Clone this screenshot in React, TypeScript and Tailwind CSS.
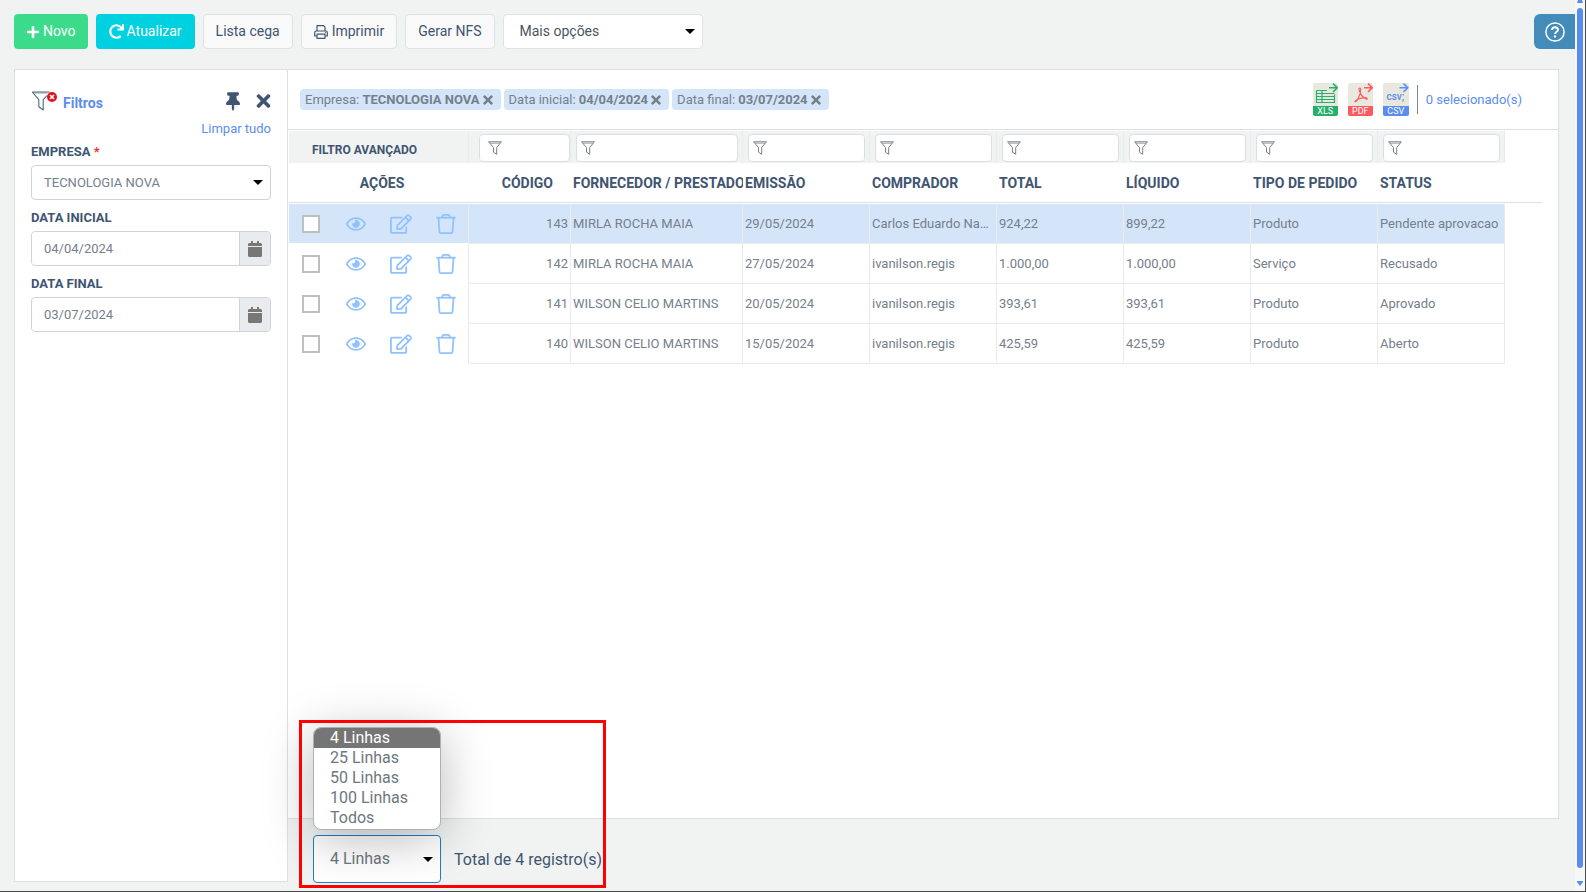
import type { ReactNode } from "react";
import { FaPlus, FaRedo, FaThumbtack, FaTimes, FaCalendar, FaRegEye, FaRegEdit } from "react-icons/fa";

type Row = {
  codigo: string;
  fornecedor: string;
  emissao: string;
  comprador: string;
  total: string;
  liquido: string;
  tipo: string;
  status: string;
};

const rows: Row[] = [
  { codigo: "143", fornecedor: "MIRLA ROCHA MAIA", emissao: "29/05/2024", comprador: "Carlos Eduardo Nascimento", total: "924,22", liquido: "899,22", tipo: "Produto", status: "Pendente aprovacao" },
  { codigo: "142", fornecedor: "MIRLA ROCHA MAIA", emissao: "27/05/2024", comprador: "ivanilson.regis", total: "1.000,00", liquido: "1.000,00", tipo: "Serviço", status: "Recusado" },
  { codigo: "141", fornecedor: "WILSON CELIO MARTINS", emissao: "20/05/2024", comprador: "ivanilson.regis", total: "393,61", liquido: "393,61", tipo: "Produto", status: "Aprovado" },
  { codigo: "140", fornecedor: "WILSON CELIO MARTINS", emissao: "15/05/2024", comprador: "ivanilson.regis", total: "425,59", liquido: "425,59", tipo: "Produto", status: "Aberto" },
];

const columns = ["FORNECEDOR / PRESTADOR", "EMISSÃO", "COMPRADOR", "TOTAL", "LÍQUIDO", "TIPO DE PEDIDO", "STATUS"];
const pageSizes = ["4 Linhas", "25 Linhas", "50 Linhas", "100 Linhas", "Todos"];

function Caret() {
  return (
    <svg className="pointer-events-none absolute inset-y-0 right-2 my-auto h-[5px] w-[10px]" viewBox="0 0 10 5" aria-hidden="true">
      <path d="M0 0h10L5 5z" fill="#000" />
    </svg>
  );
}

function Funnel({ className }: { className: string }) {
  return (
    <svg className={className} viewBox="0 0 14 14" fill="none" stroke="currentColor" strokeWidth="1" strokeLinejoin="round" aria-hidden="true">
      <path d="M.6.8h12.8L8.7 6.600V13.300L5.500 11.200V6.600z" />
      <path d="M2 2.200h10" strokeWidth=".7" />
    </svg>
  );
}

function FunnelClear() {
  return (
    <div className="relative h-5 w-8 text-[#4f6880]">
      <svg className="h-5 w-6" viewBox="0 0 24 20" fill="none" stroke="currentColor" strokeWidth="1.100" strokeLinejoin="round" aria-hidden="true">
        <path d="M1.200 1h17.600M1.200 1l6.600 7.600V15.800L12.200 19V8.600L16 4.500" />
        <path d="M2.500 2h14" strokeWidth=".6" />
      </svg>
      <span className="absolute left-4 top-[1px] flex size-[10px] items-center justify-center rounded-full bg-[#e3101f] text-white">
        <svg className="size-[6px]" viewBox="0 0 6 6" stroke="currentColor" strokeWidth="1.600" aria-hidden="true">
          <path d="M1 1l4 4M5 1L1 5" />
        </svg>
      </span>
    </div>
  );
}

function Printer() {
  return (
    <svg className="size-[14px]" viewBox="0 0 14 14" fill="none" stroke="currentColor" strokeWidth="1.2" strokeLinejoin="round" aria-hidden="true">
      <path d="M3 6V.700h6.500L11 2.200V6" />
      <path d="M2.800 11H.700V7.500Q.700 6 2.200 6h9.600q1.500 0 1.500 1.500V11h-2.100" />
      <path d="M3 9.200h8v4.100H3z" />
      <path d="M11 7.600h.8" />
    </svg>
  );
}

function Trash() {
  return (
    <svg className="size-5" viewBox="0 0 20 20" fill="none" stroke="currentColor" strokeWidth="1.800" strokeLinejoin="round" aria-hidden="true">
      <path d="M.3 3.700h19.400" />
      <path d="M5.800 3.500 6.800 1.300q.2-.4.700-.4h5q.5 0 .7.4l1 2.200" />
      <path d="M2.500 4l1 14q.1 1.100 1.200 1.100h10.600q1.100 0 1.200-1.100l1-14" />
    </svg>
  );
}

function PlainButton({ children }: { children: ReactNode }) {
  return (
    <button type="button" className="flex h-[35px] items-center gap-1 rounded-[4px] border border-[#dfe2e4] bg-[#f9f9f9] px-3 text-[#405571]">
      {children}
    </button>
  );
}

function Chip({ label, value }: { label: string; value: string }) {
  return (
    <span className="flex h-[21px] items-center rounded-[4px] bg-[#d4e5fa] pl-[5px] pr-2 text-[13px] text-[#74808c]">
      <span className="whitespace-pre">{label}: </span>
      <b className="font-bold">{value}</b>
      <button type="button" aria-label={`Remover ${label}`} className="ml-[3px]">
        <FaTimes className="h-[14px] w-[10px]" />
      </button>
    </span>
  );
}

function ExportButton({ label, width, tone, bar, children }: { label: string; width: string; tone: string; bar: string; children: ReactNode }) {
  return (
    <button type="button" aria-label={`Exportar ${label}`} className={`flex flex-col overflow-hidden rounded-[2px] bg-[#e8e8de] ${width} ${tone}`}>
      <svg className="h-[23px] w-full" viewBox="0 0 25 23" aria-hidden="true">
        {children}
        <path d="M16 4.800h8.300M20 .6l4.300 4.200L20 9" fill="none" stroke="currentColor" strokeWidth="1.600" />
      </svg>
      <span className={`h-[10px] w-full text-center text-[9px] leading-[10px] text-white ${bar}`}>{label}</span>
    </button>
  );
}

function DateField({ id, label, value }: { id: string; label: string; value: string }) {
  return (
    <div className="flex flex-col">
      <label htmlFor={id} className="h-[31px] pt-[9px] text-[13px] leading-[18px] font-bold text-[#405571]">{label}</label>
      <div className="flex h-[35px] rounded-[4px] border border-[#ced4da] text-[13px]">
        <input id={id} defaultValue={value} className="min-w-0 flex-1 rounded-l-[4px] bg-white px-3 text-[#74808c] outline-none" />
        <button type="button" aria-label={`Abrir calendário: ${label}`} className="flex w-[31px] items-center justify-center rounded-r-[3px] border-l border-[#ced4da] bg-[#e9ecef] text-[#777]">
          <FaCalendar className="size-4" />
        </button>
      </div>
    </div>
  );
}

function Sidebar() {
  return (
    <aside className="flex w-[274px] shrink-0 flex-col border border-[#dcdfe4] bg-white px-4 pt-[19px]">
      <div className="flex h-6 items-center">
        <FunnelClear />
        <h2 className="pt-1 text-[14px] font-bold text-[#5b8def]">Filtros</h2>
        <div className="ml-auto flex items-center gap-4 text-[#405571]">
          <button type="button" aria-label="Fixar filtros"><FaThumbtack className="h-[19px] w-[14px]" /></button>
          <button type="button" aria-label="Fechar filtros"><FaTimes className="h-5 w-[15px]" /></button>
        </div>
      </div>
      <button type="button" className="mt-[6px] self-end text-[13px] leading-5 text-[#5b8def]">Limpar tudo</button>
      <label htmlFor="empresa" className="mt-[3px] h-[23px] pt-[1px] text-[13px] leading-[18px] font-bold text-[#405571]">
        EMPRESA <span className="text-[#e3342f]">*</span>
      </label>
      <div className="relative">
        <select id="empresa" className="block h-[35px] w-full appearance-none rounded-[4px] border border-[#ced4da] bg-white px-3 text-[13px] text-[#74808c]">
          <option>TECNOLOGIA NOVA</option>
        </select>
        <Caret />
      </div>
      <DateField id="data-inicial" label="DATA INICIAL" value="04/04/2024" />
      <DateField id="data-final" label="DATA FINAL" value="03/07/2024" />
    </aside>
  );
}

function OrdersTable() {
  const cell = "h-10 truncate border-r border-b border-[#e9ebed] px-[2px]";
  return (
    <table className="w-full table-fixed border-separate border-spacing-0 text-left text-[13px] text-[#74808c]">
      <colgroup>
        <col className="w-[180px]" />
        <col className="w-[102px]" />
        <col className="w-[172px]" />
        <col className="w-[127px]" />
        <col className="w-[127px]" />
        <col className="w-[127px]" />
        <col className="w-[127px]" />
        <col className="w-[127px]" />
        <col className="w-[127px]" />
        <col />
      </colgroup>
      <thead className="text-[#405571]">
        <tr>
          <td className="h-[33px] border-t border-r border-t-white border-r-[#e9ebed] bg-[#f1f3f3] pl-[23px] pt-[5px] text-[12px] font-bold">FILTRO AVANÇADO</td>
          <td className="border-t border-r border-t-white border-r-[#e9ebed] bg-[#f1f3f3] pl-[10px] pt-[2px]">
            <div className="flex h-7 items-center rounded-[4px] border border-[#dcdfe0] bg-white pl-2 text-[#74808c]">
              <Funnel className="size-[14px] shrink-0" />
              <input aria-label="Filtrar CÓDIGO" className="min-w-0 flex-1 outline-none" />
            </div>
          </td>
          {columns.map((name) => (
            <td key={name} className="border-t border-r border-t-white border-r-[#e9ebed] bg-[#f1f3f3] pl-[5px] pr-1 pt-[2px]">
              <div className="flex h-7 items-center rounded-[4px] border border-[#dcdfe0] bg-white pl-1 text-[#74808c]">
                <Funnel className="size-[14px] shrink-0" />
                <input aria-label={`Filtrar ${name}`} className="min-w-0 flex-1 outline-none" />
              </div>
            </td>
          ))}
          <td />
        </tr>
        <tr className="text-[14px]">
          <th className="h-10 border-b border-[#dcdfe4] pl-[6px] pt-[2px] text-center font-bold">AÇÕES</th>
          <th className="border-b border-[#dcdfe4] pr-[18px] pt-[2px] text-right font-bold">CÓDIGO</th>
          {columns.map((name) => (
            <th key={name} className="overflow-hidden border-b border-[#dcdfe4] pl-[2px] pt-[2px] font-bold whitespace-nowrap">{name}</th>
          ))}
          <td className="border-b border-[#dcdfe4]" />
        </tr>
      </thead>
      <tbody className="[&>tr:first-child>td]:h-[41px] [&>tr:first-child>td]:border-t [&>tr:first-child>td]:border-t-white">
        {rows.map((row, i) => {
          const bg = i === 0 ? "bg-[#d4e5fa]" : "";
          return (
            <tr key={row.codigo}>
              <td className={`h-10 border-r border-b border-r-[#e9ebed] border-b-white ${bg}`}>
                <div className="grid grid-cols-4 items-center justify-items-center text-[#90c3fd]">
                  <input type="checkbox" aria-label={`Selecionar pedido ${row.codigo}`} className="size-[18px] appearance-none border-2 border-[#bfbfbf] bg-white" />
                  <button type="button" aria-label="Visualizar"><FaRegEye className="size-5" /></button>
                  <button type="button" aria-label="Editar"><FaRegEdit className="size-[22px]" /></button>
                  <button type="button" aria-label="Excluir"><Trash /></button>
                </div>
              </td>
              <td className={`${cell} text-right ${bg}`}>{row.codigo}</td>
              <td className={`${cell} ${bg}`}>{row.fornecedor}</td>
              <td className={`${cell} ${bg}`}>{row.emissao}</td>
              <td className={`${cell} ${bg}`}>{row.comprador}</td>
              <td className={`${cell} ${bg}`}>{row.total}</td>
              <td className={`${cell} ${bg}`}>{row.liquido}</td>
              <td className={`${cell} ${bg}`}>{row.tipo}</td>
              <td className={`${cell} ${bg}`}>{row.status}</td>
              <td />
            </tr>
          );
        })}
      </tbody>
    </table>
  );
}

function Footer() {
  return (
    <footer className="relative flex h-[63px] items-center pl-[25px]">
      <div className="relative mt-[17px] w-32">
        <select aria-label="Linhas por página" className="block h-12 w-full appearance-none rounded-[4px] border border-[#1b7fc9] bg-white px-4 text-[16px] text-[#6d7780] outline-none">
          {pageSizes.map((size) => (
            <option key={size}>{size}</option>
          ))}
        </select>
        <Caret />
        <ul role="listbox" aria-label="Linhas por página" className="absolute bottom-[53px] left-0 z-10 w-full overflow-hidden rounded-[8px] border border-[#b0b0b0] bg-white pb-px text-[16px] leading-5 text-[#6d7780] shadow-[0_8px_50px_rgba(0,0,0,0.28)]">
          {pageSizes.map((size, i) => (
            <li key={size} role="option" aria-selected={i === 0} className={`px-4 ${i === 0 ? "bg-[#757575] text-white" : ""}`}>{size}</li>
          ))}
        </ul>
      </div>
      <span className="ml-[13px] mt-[18px] text-[16px] text-[#405571]">Total de 4 registro(s)</span>
      <div className="pointer-events-none absolute -bottom-[6px] left-[11px] z-20 h-[168px] w-[307px] border-3 border-[#f00]" />
    </footer>
  );
}

export default function App() {
  return (
    <div className="flex min-h-screen border-r border-b border-[#4a4a4a] bg-[#f1f3f3] font-[Roboto,sans-serif] text-[14px]">
      <div className="flex min-w-0 flex-1 flex-col pt-[14px] pb-[9px]">
        <header className="flex h-[35px] items-center gap-2 pl-[14px]">
          <button type="button" className="flex h-[35px] items-center gap-[3px] rounded-[4px] bg-[#3bdb8b] px-3 text-white">
            <FaPlus className="size-[14px]" />Novo
          </button>
          <button type="button" className="flex h-[35px] items-center gap-[3px] rounded-[4px] bg-[#00d1e0] px-[13px] text-white">
            <FaRedo className="size-[15px]" />Atualizar
          </button>
          <PlainButton>Lista cega</PlainButton>
          <PlainButton><Printer />Imprimir</PlainButton>
          <PlainButton>Gerar NFS</PlainButton>
          <div className="relative w-[200px]">
            <select aria-label="Mais opções" className="block h-[35px] w-full appearance-none rounded-[4px] border border-[#dfe2e4] bg-white px-4 text-[#4b5563]">
              <option>Mais opções</option>
            </select>
            <Caret />
          </div>
          <button type="button" aria-label="Ajuda" className="ml-auto flex h-[35px] w-[41px] items-center justify-center rounded-l-[6px] bg-[#438cb9]">
            <svg className="size-5" viewBox="0 0 20 20" fill="none" stroke="#fff" strokeWidth="1.500" aria-hidden="true">
              <circle cx="10" cy="10" r="9.100" />
              <path d="M7 8q.2-2.800 3-2.800T13 7.800Q13 9 11.600 9.800T10 12" strokeWidth="1.900" />
              <circle cx="10" cy="14.500" r="1.200" fill="#fff" stroke="none" />
            </svg>
          </button>
        </header>
        <div className="mt-5 flex flex-1 pl-[14px] pr-4">
          <Sidebar />
          <main className="flex min-w-0 flex-1 flex-col">
            <section className="flex flex-1 flex-col border-t border-r border-b border-[#dcdfe4] bg-white">
              <div className="flex h-[60px] items-center gap-[3px] border-b border-[#dcdfe4] pl-3 pr-9">
                <Chip label="Empresa" value="TECNOLOGIA NOVA" />
                <Chip label="Data inicial" value="04/04/2024" />
                <Chip label="Data final" value="03/07/2024" />
                <div className="ml-auto flex items-center gap-2">
                  <div className="flex gap-[10px]">
                    <ExportButton label="XLS" width="w-[25px]" tone="text-[#27b06b]" bar="bg-[#27b06b]">
                      <path d="M3.500 7.500H14M3.500 7.500v12h18v-8M3.500 10.500h18M3.500 13.500h18M3.500 16.500h18M3.500 19.500h18M9 7.500v12" fill="none" stroke="currentColor" strokeWidth="1.200" />
                    </ExportButton>
                    <ExportButton label="PDF" width="w-[25px]" tone="text-[#fd5a5f]" bar="bg-[#fd5a5f]">
                      <path d="M12 5q-1.500 0-.7 2.500Q13 13 17 15.500q3 1.300 2-.2-2-1.600-7.500.4Q7 17.300 7 18.600q1.500.6 3.400-3.600Q12.800 9.500 12.800 6.500 12.800 5 12 5z" fill="none" stroke="currentColor" strokeWidth="1.200" />
                    </ExportButton>
                    <ExportButton label="CSV" width="w-[26px]" tone="text-[#5b8def]" bar="bg-[#5b8def]">
                      <text x="3" y="17" fontSize="10" fontWeight="500" fill="currentColor">csv;</text>
                    </ExportButton>
                  </div>
                  <div className="h-[29px] w-px bg-[#7d8591]" />
                  <span className="text-[13px] text-[#5b8def]">0 selecionado(s)</span>
                </div>
              </div>
              <div className="pl-px pr-4">
                <OrdersTable />
              </div>
            </section>
            <Footer />
          </main>
        </div>
      </div>
      <div className="flex w-[10px] shrink-0 flex-col items-center bg-[#f6f7f7]" aria-hidden="true">
        <svg className="mb-[5px] h-[3px] w-[6px]" viewBox="0 0 6 3"><path d="M1 0h4l1 3H0z" fill="#5b8def" /></svg>
        <div className="w-[6px] flex-1 rounded-full bg-[#5b8def]" />
        <svg className="mt-[13px] mb-[5px] h-[5px] w-[6px]" viewBox="0 0 6 5"><path d="M0 0h6v1L3 5 0 1z" fill="#5b8def" /></svg>
      </div>
    </div>
  );
}
